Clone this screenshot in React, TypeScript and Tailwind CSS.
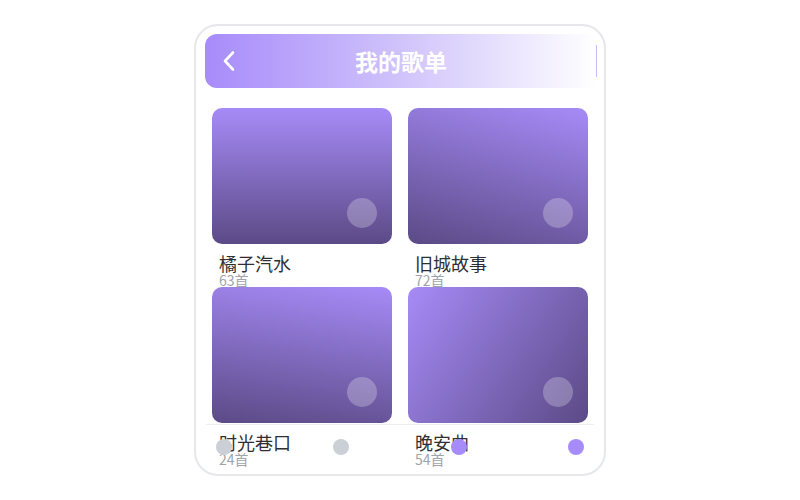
import React from "react";

const items = [
  { title: "橘子汽水", count: "63首", grad: "bg-[linear-gradient(180deg,#a68bf7_0%,#5b4a86_100%)]" },
  { title: "旧城故事", count: "72首", grad: "bg-[linear-gradient(195deg,#a68bf7_0%,#5b4a86_100%)]" },
  { title: "时光巷口", count: "24首", grad: "bg-[linear-gradient(188deg,#a68bf7_0%,#5b4a86_100%)]" },
  { title: "晚安曲", count: "54首", grad: "bg-[linear-gradient(125deg,#a68bf7_0%,#5b4a86_100%)]" },
];

export default function App() {
  return (
    <div className="w-[800px] h-[500px] bg-white flex items-center justify-center font-['Noto_Sans_CJK_SC','Noto_Sans',sans-serif]">
      <div className="relative w-[412px] h-[452px] border-2 border-[#e5e7eb] rounded-[24px] overflow-hidden bg-white">
        <div className="relative mt-[8px] ml-[9px] mr-[7px] h-[54px] rounded-[12px] bg-[linear-gradient(90deg,#a78bfa_0%,#d0c3fb_50%,#ffffff_100%)] flex items-center justify-center">
          <svg className="absolute left-[17px] top-1/2 -translate-y-1/2" width="14" height="22" viewBox="0 0 14 22" fill="none">
            <path d="M11 2.5 L3 11 L11 19.5" stroke="white" strokeWidth="2.6" strokeLinecap="round" strokeLinejoin="round" />
          </svg>
          <span className="text-white font-bold text-[23px] leading-none">我的歌单</span>
          <div className="absolute right-0 top-[11px] bottom-[11px] w-px bg-[#c9b8fb]" />
        </div>
        <div className="grid grid-cols-2 gap-x-[16px] px-[16px] mt-[20px]">
          {items.map((it) => (
            <div key={it.title} className="h-[179px]">
              <div className={`relative h-[136px] rounded-[10px] ${it.grad}`}>
                <div className="absolute w-[30px] h-[30px] rounded-full bg-white/25 right-[15px] bottom-[16px]" />
              </div>
              <div className="pl-[7px] mt-[9px]">
                <div className="text-[18px] leading-[20px] text-[#2f2f33]">{it.title}</div>
                <div className="text-[14px] leading-[14px] text-[#a0a4ab]">{it.count}</div>
              </div>
            </div>
          ))}
        </div>
        <div className="absolute left-[10px] right-[10px] bottom-[6px] h-[44px] border-t border-[#eceef1] flex items-center justify-between px-[10px]">
          <div className="w-4 h-4 rounded-full bg-[#cbd0d6]" />
          <div className="w-4 h-4 rounded-full bg-[#cbd0d6]" />
          <div className="w-4 h-4 rounded-full bg-[#a78bfa]" />
          <div className="w-4 h-4 rounded-full bg-[#a78bfa]" />
        </div>
      </div>
    </div>
  );
}
